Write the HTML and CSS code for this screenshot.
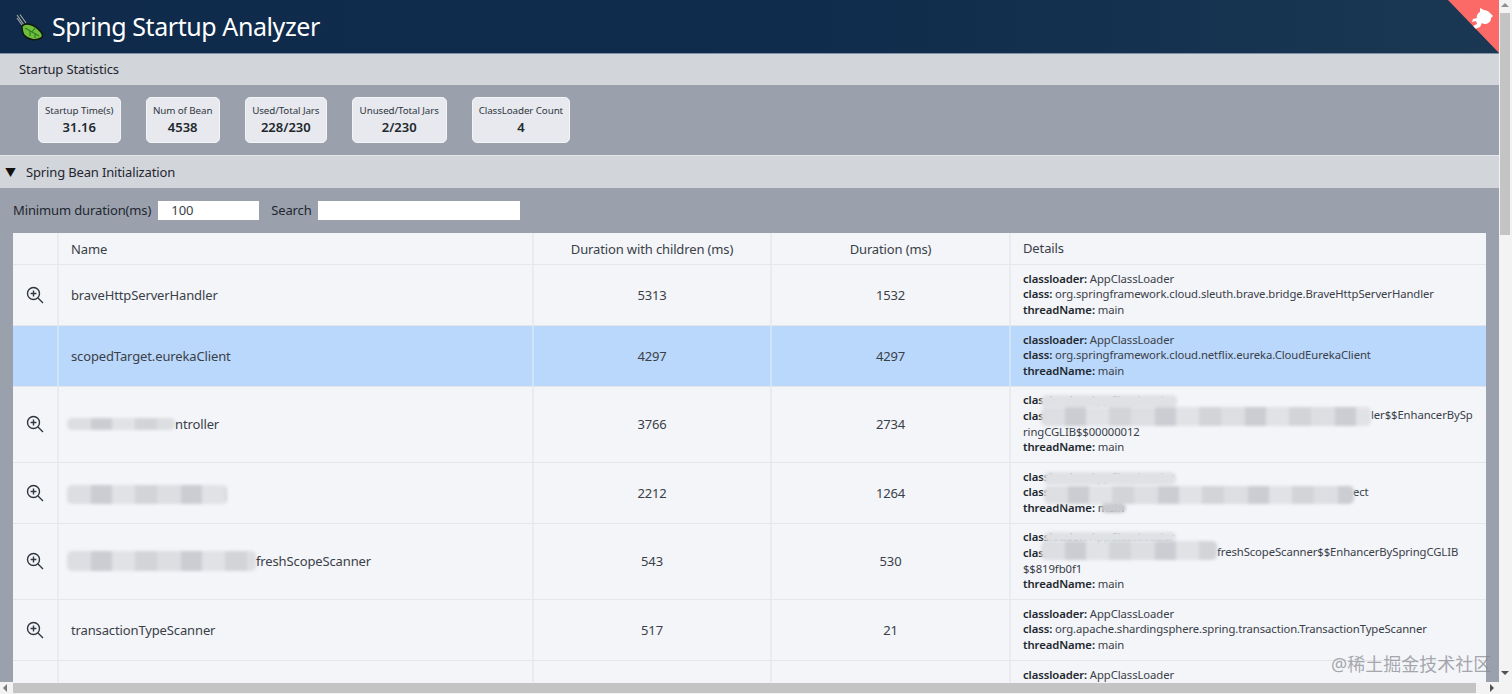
FILE: index.html
```html
<!DOCTYPE html>
<html lang="en">
<head>
<meta charset="utf-8">
<title>Spring Startup Analyzer</title>
<link rel="stylesheet" href="styles.css">
</head>
<body>
<div class="window">
  <div class="page-row">
    <main class="page">
      <header class="topbar">
        <svg class="logo" viewBox="0 0 30 30" width="30" height="30" aria-hidden="true">
          <path d="M3 3 L10 13 M6 2.5 L12 11 M3 6 L8 13" stroke="#a9aca6" stroke-width="1.1" fill="none"/>
          <path d="M8 14 C12 10 20 12 27 20 C29 23 29 25 27 26 C22 29 14 28 10 23 C8 20 8 17 8 14 Z" fill="#6fbe3c" stroke="#10190c" stroke-width="1.5"/>
          <path d="M11 16 L25 24 M16 19 L16 24 M18 20 L21 16 M21 22 L21 26" stroke="#2f7d22" stroke-width="1.2" fill="none"/>
        </svg>
        <h1 class="title">Spring Startup Analyzer</h1>
        <a class="ribbon" href="#" aria-label="GitHub">
          <svg class="cat" viewBox="0 0 24 24" width="24" height="24" aria-hidden="true">
            <path d="M10 6 L10 2 L14 4 C16 4 18 5 19 6 L23 10 L21 12 C21 16 18 18 14 18 L12 17 L10 21 L5 23 L3 20 L7 18 L6 15 L2 16 L3 13 L7 12 C6 10 8 7 10 6 Z" fill="#fff"/>
          </svg>
        </a>
      </header>

      <section class="bar bar-stats"><span class="bar-label">Startup Statistics</span></section>
      <div class="stats">
        <div class="stat stat-a"><div class="stat-name">Startup Time(s)</div><div class="stat-value">31.16</div></div>
        <div class="stat stat-b"><div class="stat-name">Num of Bean</div><div class="stat-value">4538</div></div>
        <div class="stat stat-c"><div class="stat-name">Used/Total Jars</div><div class="stat-value">228/230</div></div>
        <div class="stat stat-d"><div class="stat-name">Unused/Total Jars</div><div class="stat-value">2/230</div></div>
        <div class="stat stat-e"><div class="stat-name">ClassLoader Count</div><div class="stat-value">4</div></div>
      </div>

      <section class="bar bar-beans"><span class="caret">▼</span><span class="bar-label">Spring Bean Initialization</span></section>
      <div class="filters">
        <label class="filter-label">Minimum duration(ms)</label>
        <div class="input input-min">100</div>
        <label class="filter-label filter-search">Search</label>
        <div class="input input-search"></div>
      </div>

      <div class="table">
        <div class="row row-head">
          <div class="cell c-icon"></div>
          <div class="cell c-name">Name</div>
          <div class="cell c-num">Duration with children (ms)</div>
          <div class="cell c-num">Duration (ms)</div>
          <div class="cell c-details head-details">Details</div>
        </div>

        <div class="row row-60">
          <div class="cell c-icon"><svg class="zoom-ic" viewBox="0 0 18 18" width="18" height="18"><use href="#zoom"/></svg></div>
          <div class="cell c-name">braveHttpServerHandler</div>
          <div class="cell c-num">5313</div>
          <div class="cell c-num">1532</div>
          <div class="cell c-details"><b>classloader:</b> AppClassLoader<br><b>class:</b> org.springframework.cloud.sleuth.brave.bridge.BraveHttpServerHandler<br><b>threadName:</b> main</div>
        </div>

        <div class="row row-60 row-selected">
          <div class="cell c-icon"></div>
          <div class="cell c-name">scopedTarget.eurekaClient</div>
          <div class="cell c-num">4297</div>
          <div class="cell c-num">4297</div>
          <div class="cell c-details"><b>classloader:</b> AppClassLoader<br><b>class:</b> org.springframework.cloud.netflix.eureka.CloudEurekaClient<br><b>threadName:</b> main</div>
        </div>

        <div class="row row-76">
          <div class="cell c-icon"><svg class="zoom-ic" viewBox="0 0 18 18" width="18" height="18"><use href="#zoom"/></svg></div>
          <div class="cell c-name masked"><span class="blur blur-n1"></span><span class="name-right n1">ntroller</span></div>
          <div class="cell c-num">3766</div>
          <div class="cell c-num">2734</div>
          <div class="cell c-details masked"><b>classloader:</b> AppClassLoader<br><b>class:</b> <span class="tail t1">ler$$EnhancerBySp</span><br>ringCGLIB$$00000012<br><b>threadName:</b> main<span class="blur blur-d1a"></span><span class="blur blur-d1b"></span></div>
        </div>

        <div class="row row-60">
          <div class="cell c-icon"><svg class="zoom-ic" viewBox="0 0 18 18" width="18" height="18"><use href="#zoom"/></svg></div>
          <div class="cell c-name masked"><span class="blur blur-n2"></span></div>
          <div class="cell c-num">2212</div>
          <div class="cell c-num">1264</div>
          <div class="cell c-details masked"><b>classloader:</b> AppClassLoader<br><b>class:</b> <span class="tail t2">ect</span><br><b>threadName:</b> main<span class="blur blur-d2a"></span><span class="blur blur-d2b"></span><span class="blur blur-d2c"></span></div>
        </div>

        <div class="row row-76">
          <div class="cell c-icon"><svg class="zoom-ic" viewBox="0 0 18 18" width="18" height="18"><use href="#zoom"/></svg></div>
          <div class="cell c-name masked"><span class="blur blur-n3"></span><span class="name-right n3">freshScopeScanner</span></div>
          <div class="cell c-num">543</div>
          <div class="cell c-num">530</div>
          <div class="cell c-details masked"><b>classloader:</b> AppClassLoader<br><b>class:</b> <span class="tail t3">freshScopeScanner$$EnhancerBySpringCGLIB</span><br>$$819fb0f1<br><b>threadName:</b> main<span class="blur blur-d3a"></span><span class="blur blur-d3b"></span></div>
        </div>

        <div class="row row-60">
          <div class="cell c-icon"><svg class="zoom-ic" viewBox="0 0 18 18" width="18" height="18"><use href="#zoom"/></svg></div>
          <div class="cell c-name">transactionTypeScanner</div>
          <div class="cell c-num">517</div>
          <div class="cell c-num">21</div>
          <div class="cell c-details"><b>classloader:</b> AppClassLoader<br><b>class:</b> org.apache.shardingsphere.spring.transaction.TransactionTypeScanner<br><b>threadName:</b> main</div>
        </div>

        <div class="row row-60">
          <div class="cell c-icon"></div>
          <div class="cell c-name"></div>
          <div class="cell c-num"></div>
          <div class="cell c-num"></div>
          <div class="cell c-details details-top"><b>classloader:</b> AppClassLoader</div>
        </div>
      </div>
      <div class="watermark">@稀土掘金技术社区</div>
    </main>

    <aside class="vscroll">
      <div class="arrow arrow-up"></div>
      <div class="vthumb"></div>
      <div class="arrow arrow-down"></div>
    </aside>
  </div>
  <div class="hscroll">
    <div class="arrow arrow-left"></div>
    <div class="hthumb"></div>
    <div class="arrow arrow-right"></div>
  </div>
</div>

<svg class="defs" width="0" height="0" aria-hidden="true">
  <symbol id="zoom" viewBox="0 0 18 18">
    <circle cx="7.5" cy="7.5" r="6" fill="none" stroke="#30363f" stroke-width="1.4"/>
    <path d="M12 12 L17 17 M7.5 4.6 V10.4 M4.6 7.5 H10.4" fill="none" stroke="#30363f" stroke-width="1.4"/>
  </symbol>
</svg>
</body>
</html>
```

FILE: styles.css
```css
* { box-sizing: border-box; }
html, body { margin: 0; height: 100%; overflow: hidden; }
body { font-family: "Noto Sans", "Noto Sans CJK SC", sans-serif; color: #3a4048; background: #f1f1f1; }
.defs { position: absolute; }

.window { width: 1512px; height: 694px; display: flex; flex-direction: column; }
.page-row { display: flex; height: 682px; }
.page { position: relative; width: 1499px; height: 682px; overflow: hidden; background: #9aa1ad; }

.topbar { position: relative; height: 54px; display: flex; align-items: center; padding-left: 14px; gap: 8px; overflow: hidden; background: linear-gradient(90deg, #0f2a4b 0%, #102c4c 55%, #1a3753 100%); border-bottom: 1px solid #7f92a8; }
.logo { flex: none; }
.title { margin: 0 0 2px; font-size: 25px; font-weight: 400; letter-spacing: -0.42px; color: #fff; }
.ribbon { position: absolute; top: 0; right: 0; width: 51px; height: 53px; background: #fb6a67; clip-path: polygon(0 0, 100% 0, 100% 100%); }
.cat { position: absolute; top: 6px; right: 5px; }

.bar { display: flex; align-items: center; background: #d2d5da; }
.bar-stats { height: 31px; padding: 0 0 2px 19px; }
.bar-beans { height: 33px; padding-left: 5px; border-top: 1px solid #e3e5e8; }
.bar-label { font-size: 13px; letter-spacing: -0.15px; color: #1f2630; }
.caret { font-size: 11px; width: 21px; color: #111; }

.stats { height: 70px; padding: 12px 0 0 38px; display: flex; gap: 25px; }
.stat { height: 46px; padding-top: 6px; text-align: center; border-radius: 5px; background: #e7e9ee; border: 1px solid #f3f4f6; }
.stat-a { width: 82.5px; }
.stat-b { width: 74.3px; }
.stat-c { width: 82px; }
.stat-d { width: 94.8px; }
.stat-e { width: 98.5px; }
.stat-name { font-size: 9.8px; line-height: 14px; letter-spacing: -0.1px; color: #30363f; white-space: nowrap; }
.stat-value { font-size: 13px; line-height: 18px; font-weight: 600; color: #22272e; }

.filters { height: 45px; padding: 0 0 1px 13px; display: flex; align-items: center; }
.filter-label { font-size: 13px; letter-spacing: -0.13px; color: #1f2630; }
.filter-search { margin-left: 12px; }
.input { height: 19px; background: #fff; font-size: 13px; line-height: 19px; padding-left: 13px; color: #3a4048; }
.input-min { width: 101px; margin-left: 7px; }
.input-search { width: 202px; margin-left: 6px; }

.table { margin-left: 13px; width: 1473px; background: #f3f5f8; }
.row { display: flex; border-bottom: 1px solid #e4e6ea; }
.row-head { height: 32px; }
.row-60 { height: 61px; }
.row-76 { height: 76px; }
.row-76 .cell { padding-bottom: 1px; }
.row-selected { background: #bad8fb; }
.cell { display: flex; align-items: center; justify-content: center; font-size: 13px; letter-spacing: -0.13px; border-right: 2px solid #e9ebef; }
.row-selected .cell { border-right-color: #cfe3fb; }
.c-icon { flex: none; }
.row .c-icon { width: 46px; padding-right: 1px; }
.c-name { width: 475px; flex: none; justify-content: flex-start; padding-left: 12px; }
.c-num { width: 238px; flex: none; }
.row .c-num + .c-num { width: 239px; }
.row .c-details { display: block; flex: 1; align-self: center; padding: 0 10px 2px 12px; border-right: 0; font-size: 11.3px; line-height: 15.6px; letter-spacing: -0.09px; color: #3a4048; word-break: break-all; }
.row .details-top { align-self: flex-start; margin-top: 6px; }
.row .head-details { padding-top: 1px; padding-bottom: 0; font-size: 13px; letter-spacing: -0.13px; }
.c-details b { font-weight: 600; color: #22272e; }
.zoom-ic { display: block; }

.masked { position: relative; }
.blur { position: absolute; display: block; border-radius: 5px; filter: blur(1.5px); background: repeating-linear-gradient(90deg, #dcdee2 0 24px, #cbcdd2 24px 45px, #e0e2e6 45px 68px, #d2d4d8 68px 90px); }
.name-right { position: absolute; top: calc(50% - 1px); transform: translateY(-50%); }
.n1 { left: 116px; }
.n3 { left: 197px; }
.tail { position: absolute; }
.t1 { left: 360px; top: 15px; }
.t2 { left: 342px; top: 15px; }
.t3 { left: 206px; top: 15px; }

.blur-n1 { left: 8px; top: 31px; width: 108px; height: 12px; }
.blur-n2 { left: 8px; top: 22px; width: 160px; height: 19px; }
.blur-n3 { left: 8px; top: 27px; width: 189px; height: 20px; }
.blur-d1a { left: 30px; top: 3px; width: 136px; height: 13px; background: #dfe1e5; }
.blur-d1b { left: 30px; top: 15px; width: 330px; height: 19px; }
.blur-d2a { left: 33px; top: 3px; width: 132px; height: 13px; background: #dfe1e5; }
.blur-d2b { left: 33px; top: 17px; width: 310px; height: 18px; }
.blur-d2c { left: 90px; top: 34px; width: 25px; height: 10px; background: #c8cace; }
.blur-d3a { left: 33px; top: 3px; width: 132px; height: 10px; background: #dfe1e5; }
.blur-d3b { left: 30px; top: 12px; width: 176px; height: 19px; }

.watermark { position: absolute; left: 1331px; top: 653px; font-size: 18px; line-height: 22px; color: rgba(130, 132, 138, 0.7); white-space: nowrap; }

.vscroll { width: 13px; height: 682px; position: relative; background: #f3f3f3; }
.vthumb { position: absolute; top: 13px; left: 1px; width: 10px; height: 222px; background: #c4c4c4; }
.arrow { position: absolute; width: 0; height: 0; border: 4px solid transparent; }
.arrow-up { top: 3px; left: 2px; border-bottom-color: #8f8f8f; border-top-width: 0; }
.arrow-down { bottom: 7px; left: 2px; border-top-color: #505050; border-bottom-width: 0; }
.hscroll { position: relative; height: 12px; background: #f3f3f3; }
.hthumb { position: absolute; left: 13px; top: 1px; width: 1463px; height: 10px; background: #c4c4c4; }
.arrow-left { top: 2px; left: 3px; border-right-color: #7a7a7a; border-left-width: 0; }
.arrow-right { top: 2px; right: 18px; border-left-color: #505050; border-right-width: 0; }
```
